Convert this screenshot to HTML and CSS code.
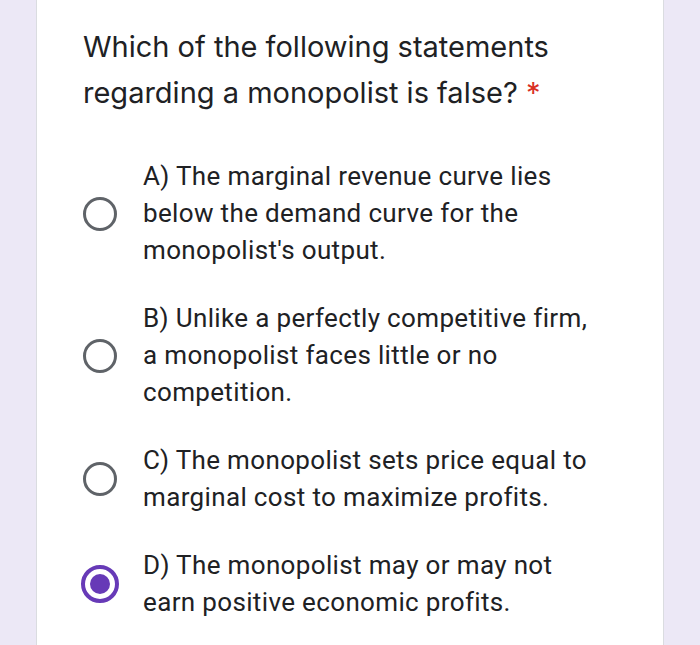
FILE: index.html
```html
<!DOCTYPE html>
<html lang="en">
<head>
<meta charset="utf-8">
<title>Question</title>
<link rel="stylesheet" href="styles.css">
</head>
<body>
<main class="card">
  <h1 class="title">Which of the following statements regarding a monopolist is false? <span class="req">*</span></h1>
  <div class="options">
    <label class="option">
      <span class="radio"></span>
      <span class="text">A) The marginal revenue curve lies below the demand curve for the monopolist's output.</span>
    </label>
    <label class="option">
      <span class="radio"></span>
      <span class="text">B) Unlike a perfectly competitive firm, a monopolist faces little or no competition.</span>
    </label>
    <label class="option">
      <span class="radio"></span>
      <span class="text">C) The monopolist sets price equal to marginal cost to maximize profits.</span>
    </label>
    <label class="option">
      <span class="radio checked"><span class="dot"></span></span>
      <span class="text">D) The monopolist may or may not earn positive economic profits.</span>
    </label>
  </div>
</main>
</body>
</html>
```

FILE: styles.css
```css
html, body {
  margin: 0;
  padding: 0;
  height: 100%;
  background: #ece8f6;
  overflow: hidden;
}

.card {
  box-sizing: border-box;
  margin-left: 36px;
  width: 628px;
  min-height: 700px;
  background: #ffffff;
  border: 1px solid #dadce0;
  border-top: none;
  padding: 24px 62px 0 46px;
}

.title {
  margin: 0;
  font-family: "Inter", "Open Sans", sans-serif;
  font-weight: 400;
  font-size: 29px;
  line-height: 46px;
  color: #202124;
}

.req {
  color: #d93025;
}

.options {
  margin-top: 42px;
  display: flex;
  flex-direction: column;
  gap: 31px;
}

.option {
  display: flex;
  align-items: center;
  gap: 26px;
}

.radio {
  box-sizing: border-box;
  flex: none;
  width: 34px;
  height: 34px;
  border: 3px solid #5f6368;
  border-radius: 50%;
  display: flex;
  align-items: center;
  justify-content: center;
}

.radio.checked {
  width: 38px;
  height: 38px;
  margin-left: -2px;
  margin-right: -2px;
  border: 4px solid #673ab7;
}

.dot {
  width: 20px;
  height: 20px;
  border-radius: 50%;
  background: #673ab7;
}

.text {
  font-family: "Roboto", "Liberation Sans", sans-serif;
  font-size: 26px;
  letter-spacing: 0.35px;
  line-height: 37px;
  color: #202124;
}
```
